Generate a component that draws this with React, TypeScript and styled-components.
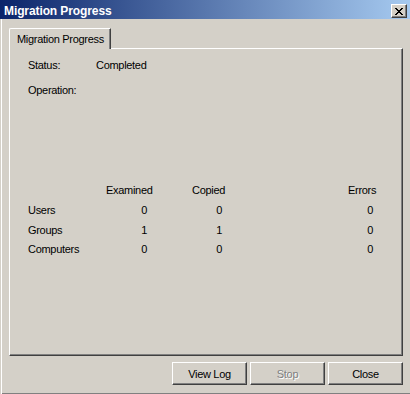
import React from 'react';
import styled, { createGlobalStyle } from 'styled-components';

const GlobalStyle = createGlobalStyle`
    html, body {
        margin: 0;
        padding: 0;
        background: #d4d0c8;
    }
    * {
        box-sizing: border-box;
    }
`;

const Window = styled.div`
    width: 410px;
    height: 394px;
    overflow: hidden;
    background: #d4d0c8;
    display: flex;
    flex-direction: column;
    font-family: 'Liberation Sans', Arial, sans-serif;
    font-size: 11px;
    letter-spacing: -0.3px;
    color: #000;
`;

const TitleBar = styled.div`
    height: 19px;
    flex: none;
    display: flex;
    align-items: flex-start;
    justify-content: space-between;
    padding: 0 3px 0 4px;
    background: linear-gradient(to right, #0a246a, #a6caf0);
`;

const TitleText = styled.div`
    padding-top: 4px;
    line-height: 14px;
    font-size: 12px;
    font-weight: bold;
    letter-spacing: -0.1px;
    color: #fff;
`;

const CloseBox = styled.div`
    margin-top: 4px;
    width: 16px;
    height: 14px;
    display: flex;
    align-items: center;
    justify-content: center;
    background: #d4d0c8;
    border: 1px solid;
    border-color: #fff #404040 #404040 #fff;
    box-shadow: inset -1px -1px 0 #808080;
`;

const Body = styled.div`
    flex: 1;
    display: flex;
    flex-direction: column;
    padding: 9px 7px 0 9px;
    box-shadow: inset 1px 0 0 #d4d0c8, inset 2px 0 0 #fff, inset 0 -1px 0 #808080;
`;

const TabStrip = styled.div`
    height: 20px;
    flex: none;
    display: flex;
`;

const Tab = styled.div`
    position: relative;
    z-index: 1;
    width: 102px;
    height: 21px;
    margin-bottom: -1px;
    padding: 4px 0 0 7px;
    background: #d4d0c8;
    border-top: 1px solid #fff;
    border-left: 1px solid #fff;
    border-right: 1px solid #404040;
    border-top-left-radius: 2px;
    box-shadow: inset -1px 0 0 #808080;
    line-height: 13px;
`;

const Panel = styled.div`
    height: 308px;
    flex: none;
    padding: 10px 0 0 18px;
    border: 1px solid;
    border-color: #fff #404040 #404040 #fff;
    box-shadow: inset -1px -1px 0 #808080;
`;

const Field = styled.div<{ gap: string }>`
    display: flex;
    line-height: 13px;
    margin-top: ${(props) => props.gap};
`;

const FieldLabel = styled.div`
    width: 68px;
`;

const Table = styled.div`
    margin-top: 84px;
    display: grid;
    grid-template-columns: 78px 86px 156px 28px;
    grid-auto-rows: 19.7px;
    align-items: center;
    line-height: 13px;
`;

const Cell = styled.div<{ pad?: number }>`
    text-align: ${(props) => (props.pad !== undefined ? 'right' : 'left')};
    padding-right: ${(props) => props.pad || 0}px;
`;

const ButtonRow = styled.div`
    margin-top: 6px;
    display: flex;
    justify-content: flex-end;
    gap: 3px;
`;

const Button = styled.button<{ disabled?: boolean }>`
    width: 75px;
    height: 23px;
    padding: 0;
    font-family: inherit;
    font-size: 11px;
    letter-spacing: -0.3px;
    background: #d4d0c8;
    border: 1px solid;
    border-color: #fff #404040 #404040 #fff;
    border-radius: 0;
    box-shadow: inset -1px -1px 0 #808080;
    color: ${(props) => (props.disabled ? '#808080' : '#000')};
    text-shadow: ${(props) => (props.disabled ? '1px 1px 0 #fff' : 'none')};
`;

const CloseGlyph = () => (
    <svg width="8" height="7" viewBox="0 0 8 7" shapeRendering="crispEdges">
        <path
            d="M0 0h2v1H0zM6 0h2v1H6zM1 1h2v1H1zM5 1h2v1H5zM2 2h4v1H2zM3 3h2v1H3zM2 4h4v1H2zM1 5h2v1H1zM5 5h2v1H5zM0 6h2v1H0zM6 6h2v1H6z"
            fill="#000"
        />
    </svg>
);

type Row = {
    name: string;
    examined: number;
    copied: number;
    errors: number;
};

const rows: Row[] = [
    { name: 'Users', examined: 0, copied: 0, errors: 0 },
    { name: 'Groups', examined: 1, copied: 1, errors: 0 },
    { name: 'Computers', examined: 0, copied: 0, errors: 0 },
];

const App: React.FC = () => {
    return (
        <>
            <GlobalStyle />
            <Window>
                <TitleBar>
                    <TitleText>Migration Progress</TitleText>
                    <CloseBox>
                        <CloseGlyph />
                    </CloseBox>
                </TitleBar>
                <Body>
                    <TabStrip>
                        <Tab>Migration Progress</Tab>
                    </TabStrip>
                    <Panel>
                        <Field gap="0">
                            <FieldLabel>Status:</FieldLabel>
                            <div>Completed</div>
                        </Field>
                        <Field gap="12px">
                            <FieldLabel>Operation:</FieldLabel>
                        </Field>
                        <Table>
                            <Cell />
                            <Cell>Examined</Cell>
                            <Cell>Copied</Cell>
                            <Cell>Errors</Cell>
                            {rows.map((r) => (
                                <React.Fragment key={r.name}>
                                    <Cell>{r.name}</Cell>
                                    <Cell pad={45}>{r.examined}</Cell>
                                    <Cell pad={126}>{r.copied}</Cell>
                                    <Cell pad={3}>{r.errors}</Cell>
                                </React.Fragment>
                            ))}
                        </Table>
                    </Panel>
                    <ButtonRow>
                        <Button>View Log</Button>
                        <Button disabled>Stop</Button>
                        <Button>Close</Button>
                    </ButtonRow>
                </Body>
            </Window>
        </>
    );
};

export default App;
